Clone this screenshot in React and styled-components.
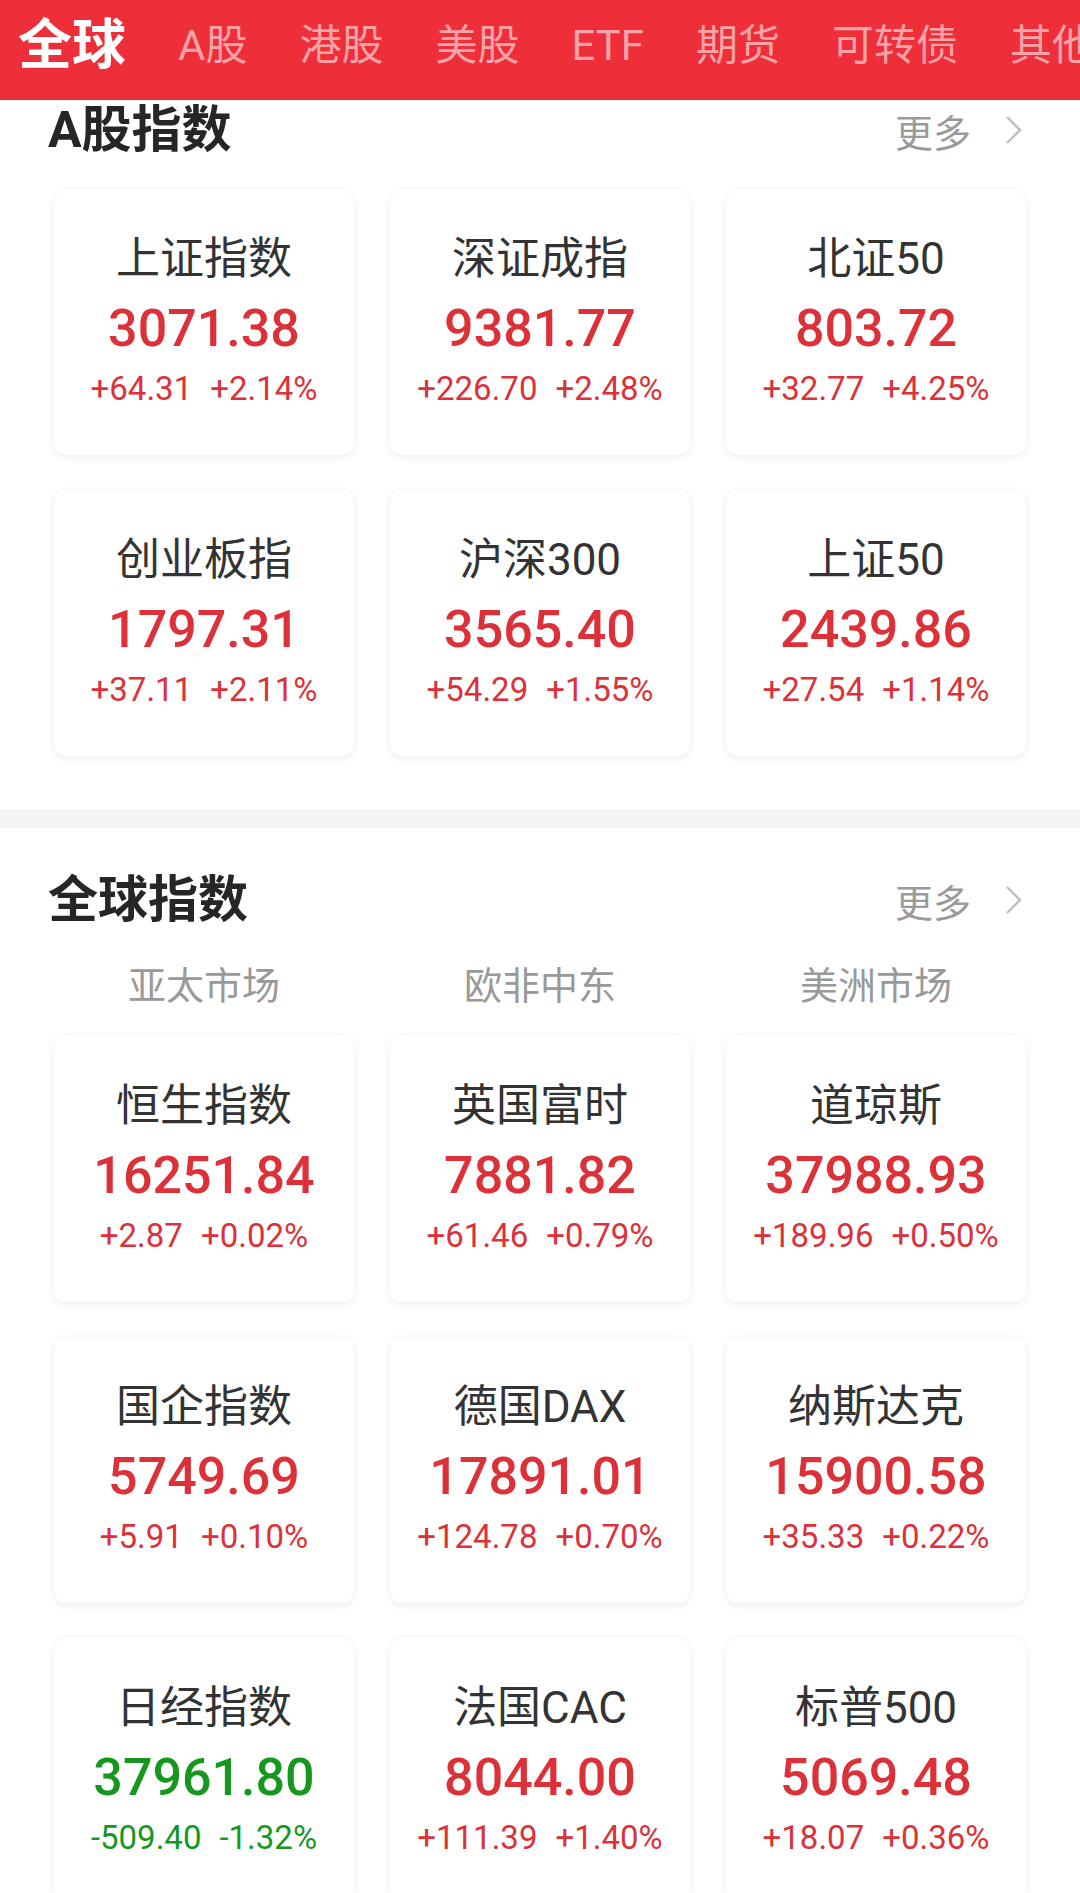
import React from "react";
import styled, { createGlobalStyle } from "styled-components";

const GlobalStyle = createGlobalStyle`
  html, body {
    margin: 0;
    padding: 0;
    background: #fff;
  }
  body {
    font-family: Roboto, "Noto Sans CJK SC", sans-serif;
    overflow: hidden;
  }
`;

const Page = styled.div`
  width: 1080px;
  height: 1893px;
  overflow: hidden;
  background: #fff;
`;

// barra vermelha do topo com as abas
const TopBar = styled.header`
  height: 100px;
  background: #ee2e38;
  display: flex;
  align-items: center;
  gap: 52px;
  padding-left: 18px;
  white-space: nowrap;
  overflow: hidden;
`;

const Tab = styled.span`
  font-family: Roboto, "Noto Sans CJK SC", sans-serif;
  font-size: ${p => (p.active ? "54px" : "42px")};
  font-weight: ${p => (p.active ? 700 : 400)};
  color: ${p => (p.active ? "#fff" : "#f8a3a8")};
  line-height: 1;
  margin-top: -8px;
  flex-shrink: 0;
`;

const Section = styled.section`
  padding-top: ${p => p.top || "0"}px;
`;

const TitleRow = styled.div`
  height: 60px;
  display: flex;
  align-items: center;
  justify-content: space-between;
  padding: 0 58px 0 48px;
`;

const Title = styled.h2`
  margin: 0;
  font-family: Roboto, "Noto Sans CJK SC", sans-serif;
  font-size: 50px;
  font-weight: 700;
  color: #262626;
  line-height: 1;
`;

const More = styled.div`
  display: flex;
  align-items: center;
  gap: 34px;
  font-family: "Noto Sans CJK SC", sans-serif;
  font-size: 38px;
  color: #9a9a9a;
  svg {
    width: 17px;
    height: 30px;
  }
`;

const SubTabs = styled.div`
  display: grid;
  grid-template-columns: repeat(3, 300px);
  column-gap: 36px;
  padding: 0 54px;
  margin-top: 33px;
  height: 40px;
  align-items: center;
`;

const SubTab = styled.div`
  text-align: center;
  font-family: "Noto Sans CJK SC", sans-serif;
  font-size: 38px;
  color: #999;
  line-height: 1;
`;

const Grid = styled.div`
  display: grid;
  grid-template-columns: repeat(3, 300px);
  grid-auto-rows: 266px;
  column-gap: 36px;
  row-gap: 35px;
  padding: 0 54px;
  margin-top: ${p => p.gap}px;
`;

const Card = styled.div`
  background: #fff;
  border-radius: 12px;
  box-shadow: 0 2px 10px rgba(0, 0, 0, 0.07), 0 0 2px rgba(0, 0, 0, 0.04);
  display: flex;
  flex-direction: column;
  align-items: center;
  padding-top: 45px;
  box-sizing: border-box;
`;

const Name = styled.div`
  font-family: Roboto, "Noto Sans CJK SC", sans-serif;
  font-size: 44px;
  line-height: 50px;
  color: #333;
  white-space: nowrap;
`;

const Value = styled.div`
  margin-top: 15px;
  font-family: Roboto, sans-serif;
  font-size: 52px;
  line-height: 60px;
  font-weight: 500;
  color: ${p => (p.down ? "#16981f" : "#dc3138")};
  white-space: nowrap;
`;

const Change = styled.div`
  margin-top: 10px;
  display: flex;
  gap: 18px;
  font-family: Roboto, sans-serif;
  font-size: 33px;
  line-height: 40px;
  color: ${p => (p.down ? "#16981f" : "#dc3138")};
  white-space: nowrap;
`;

const Divider = styled.div`
  height: 19px;
  background: #f5f5f5;
  margin-top: 53px;
`;

const tabs = ["全球", "A股", "港股", "美股", "ETF", "期货", "可转债", "其他"];

const aShares = [
  ["上证指数", "3071.38", "+64.31", "+2.14%"],
  ["深证成指", "9381.77", "+226.70", "+2.48%"],
  ["北证50", "803.72", "+32.77", "+4.25%"],
  ["创业板指", "1797.31", "+37.11", "+2.11%"],
  ["沪深300", "3565.40", "+54.29", "+1.55%"],
  ["上证50", "2439.86", "+27.54", "+1.14%"],
];

const globalIdx = [
  ["恒生指数", "16251.84", "+2.87", "+0.02%"],
  ["英国富时", "7881.82", "+61.46", "+0.79%"],
  ["道琼斯", "37988.93", "+189.96", "+0.50%"],
  ["国企指数", "5749.69", "+5.91", "+0.10%"],
  ["德国DAX", "17891.01", "+124.78", "+0.70%"],
  ["纳斯达克", "15900.58", "+35.33", "+0.22%"],
  ["日经指数", "37961.80", "-509.40", "-1.32%"],
  ["法国CAC", "8044.00", "+111.39", "+1.40%"],
  ["标普500", "5069.48", "+18.07", "+0.36%"],
];

function Chevron() {
  return (
    <svg viewBox="0 0 17 30" fill="none">
      <polyline points="2,2 15,15 2,28" stroke="#bdbdbd" strokeWidth="2.4" />
    </svg>
  );
}

function IndexCard({ item }) {
  const [name, value, diff, pct] = item;
  const down = diff.startsWith("-");
  return (
    <Card>
      <Name>{name}</Name>
      <Value down={down}>{value}</Value>
      <Change down={down}>
        <span>{diff}</span>
        <span>{pct}</span>
      </Change>
    </Card>
  );
}

function Header({ title }) {
  return (
    <TitleRow>
      <Title>{title}</Title>
      <More>
        <span>更多</span>
        <Chevron />
      </More>
    </TitleRow>
  );
}

export default function App() {
  return (
    <Page>
      <GlobalStyle />
      <TopBar>
        {tabs.map((t, i) => (
          <Tab key={t} active={i === 0}>{t}</Tab>
        ))}
      </TopBar>
      <Section>
        <Header title="A股指数" />
        <Grid gap={29}>
          {aShares.map(it => <IndexCard key={it[0]} item={it} />)}
        </Grid>
      </Section>
      <Divider />
      <Section top={42}>
        <Header title="全球指数" />
        <SubTabs>
          <SubTab>亚太市场</SubTab>
          <SubTab>欧非中东</SubTab>
          <SubTab>美洲市场</SubTab>
        </SubTabs>
        <Grid gap={33}>
          {globalIdx.map(it => <IndexCard key={it[0]} item={it} />)}
        </Grid>
      </Section>
    </Page>
  );
}
